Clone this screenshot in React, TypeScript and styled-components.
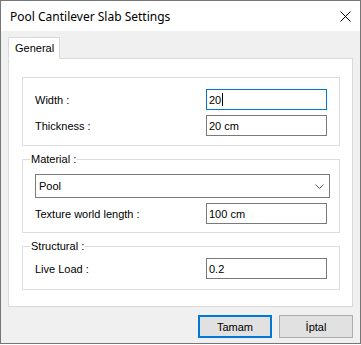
import styled, { createGlobalStyle } from 'styled-components';

const GlobalStyle = createGlobalStyle`
    html, body {
        margin: 0;
        padding: 0;
        background: #ffffff;
    }
`

type FieldProps = {
    label: string;
    value: string;
    focused?: boolean;
}

const Field = ({ label, value, focused }: FieldProps) => {
    return (
        <Row>
            <Label>{label}</Label>
            <TextBox $focused={focused}>
                {value}
                {focused && <Caret />}
            </TextBox>
        </Row>
    )
}

const App = () => {
    return (
        <>
            <GlobalStyle />
            <Window>
                <TitleBar>
                    <Title>Pool Cantilever Slab Settings</Title>
                    <svg width="11" height="11" viewBox="0 0 11 11">
                        <path d="M0.5 0.5 L10.5 10.5 M10.5 0.5 L0.5 10.5" stroke="#000" strokeWidth="1" fill="none" />
                    </svg>
                </TitleBar>
                <Body>
                    <TabStrip>
                        <Tab>General</Tab>
                    </TabStrip>
                    <TabPanel>
                        <Group>
                            <GroupBody $top={11} $bottom={9}>
                                <Field label="Width :" value="20" focused />
                                <Field label="Thickness :" value="20 cm" />
                            </GroupBody>
                        </Group>
                        <Group>
                            <GroupTitle>Material :</GroupTitle>
                            <GroupBody $top={8} $bottom={8}>
                                <ComboBox>
                                    <span>Pool</span>
                                    <svg width="9" height="5" viewBox="0 0 9 5">
                                        <path d="M0.5 0.5 L4.5 4.5 L8.5 0.5" stroke="#555" strokeWidth="1" fill="none" />
                                    </svg>
                                </ComboBox>
                                <Field label="Texture world length :" value="100 cm" />
                            </GroupBody>
                        </Group>
                        <Group>
                            <GroupTitle>Structural :</GroupTitle>
                            <GroupBody $top={5} $bottom={10}>
                                <Field label="Live Load :" value="0.2" />
                            </GroupBody>
                        </Group>
                    </TabPanel>
                    <ButtonBar>
                        <DialogButton $default>Tamam</DialogButton>
                        <DialogButton>İptal</DialogButton>
                    </ButtonBar>
                </Body>
            </Window>
        </>
    )
}

export default App

const Window = styled.div`
    width: 361px;
    height: 344px;
    box-sizing: border-box;
    border: 1px solid #767676;
    background: #f0f0f0;
    display: flex;
    flex-direction: column;
    font-family: "Liberation Sans", Arial, sans-serif;
    font-size: 11px;
    color: #000;
`

const TitleBar = styled.div`
    height: 30px;
    flex-shrink: 0;
    background: #ffffff;
    display: flex;
    align-items: center;
    justify-content: space-between;
    padding: 0 9px 0 9px;
`

const Title = styled.span`
    font-family: "Noto Sans", "Open Sans", sans-serif;
    font-size: 12px;
`

const Body = styled.div`
    flex: 1;
    display: flex;
    flex-direction: column;
    padding: 6px 7px 0 7px;
`

const TabStrip = styled.div`
    display: flex;
`

const Tab = styled.div`
    position: relative;
    z-index: 1;
    height: 22px;
    box-sizing: border-box;
    margin-bottom: -1px;
    padding: 0 5px 0 6px;
    line-height: 20px;
    background: #ffffff;
    border: 1px solid #d9d9d9;
    border-bottom: 1px solid #ffffff;
`

const TabPanel = styled.div`
    background: #ffffff;
    border: 1px solid #d9d9d9;
    padding: 18px 12px 16px 13px;
    display: flex;
    flex-direction: column;
    gap: 7px;
`

const Group = styled.fieldset`
    margin: 0;
    padding: 0;
    min-width: 0;
    border: 1px solid #dcdcdc;
`

const GroupTitle = styled.legend`
    margin-left: 7px;
    padding: 0 1px;
    line-height: 13px;
    font-size: 11px;
`

const GroupBody = styled.div<{ $top: number; $bottom: number }>`
    display: flex;
    flex-direction: column;
    gap: 5px;
    padding: ${p => p.$top}px 12px ${p => p.$bottom}px 12px;
`

const Row = styled.div`
    height: 21px;
    display: flex;
    align-items: center;
    justify-content: space-between;
`

const Label = styled.span`
    white-space: nowrap;
`

const TextBox = styled.div<{ $focused?: boolean }>`
    width: 121px;
    height: 21px;
    box-sizing: border-box;
    border: 1px solid ${p => p.$focused ? '#0078d7' : '#7a7a7a'};
    background: #ffffff;
    padding-left: 2px;
    display: flex;
    align-items: center;
`

const Caret = styled.span`
    width: 1px;
    height: 13px;
    margin-left: 1px;
    background: #000;
`

const ComboBox = styled.div`
    height: 24px;
    box-sizing: border-box;
    margin-right: -3px;
    border: 1px solid #7a7a7a;
    background: #ffffff;
    padding: 0 5px 0 3px;
    display: flex;
    align-items: center;
    justify-content: space-between;
`

const ButtonBar = styled.div`
    display: flex;
    justify-content: flex-end;
    gap: 7px;
    padding-top: 8px;
`

const DialogButton = styled.button<{ $default?: boolean }>`
    width: 74px;
    height: 23px;
    box-sizing: border-box;
    margin: 0;
    padding: 0;
    background: #e1e1e1;
    border: ${p => p.$default ? '2px solid #0078d7' : '1px solid #adadad'};
    font-family: "Liberation Sans", Arial, sans-serif;
    font-size: 11px;
    color: #000;
`
